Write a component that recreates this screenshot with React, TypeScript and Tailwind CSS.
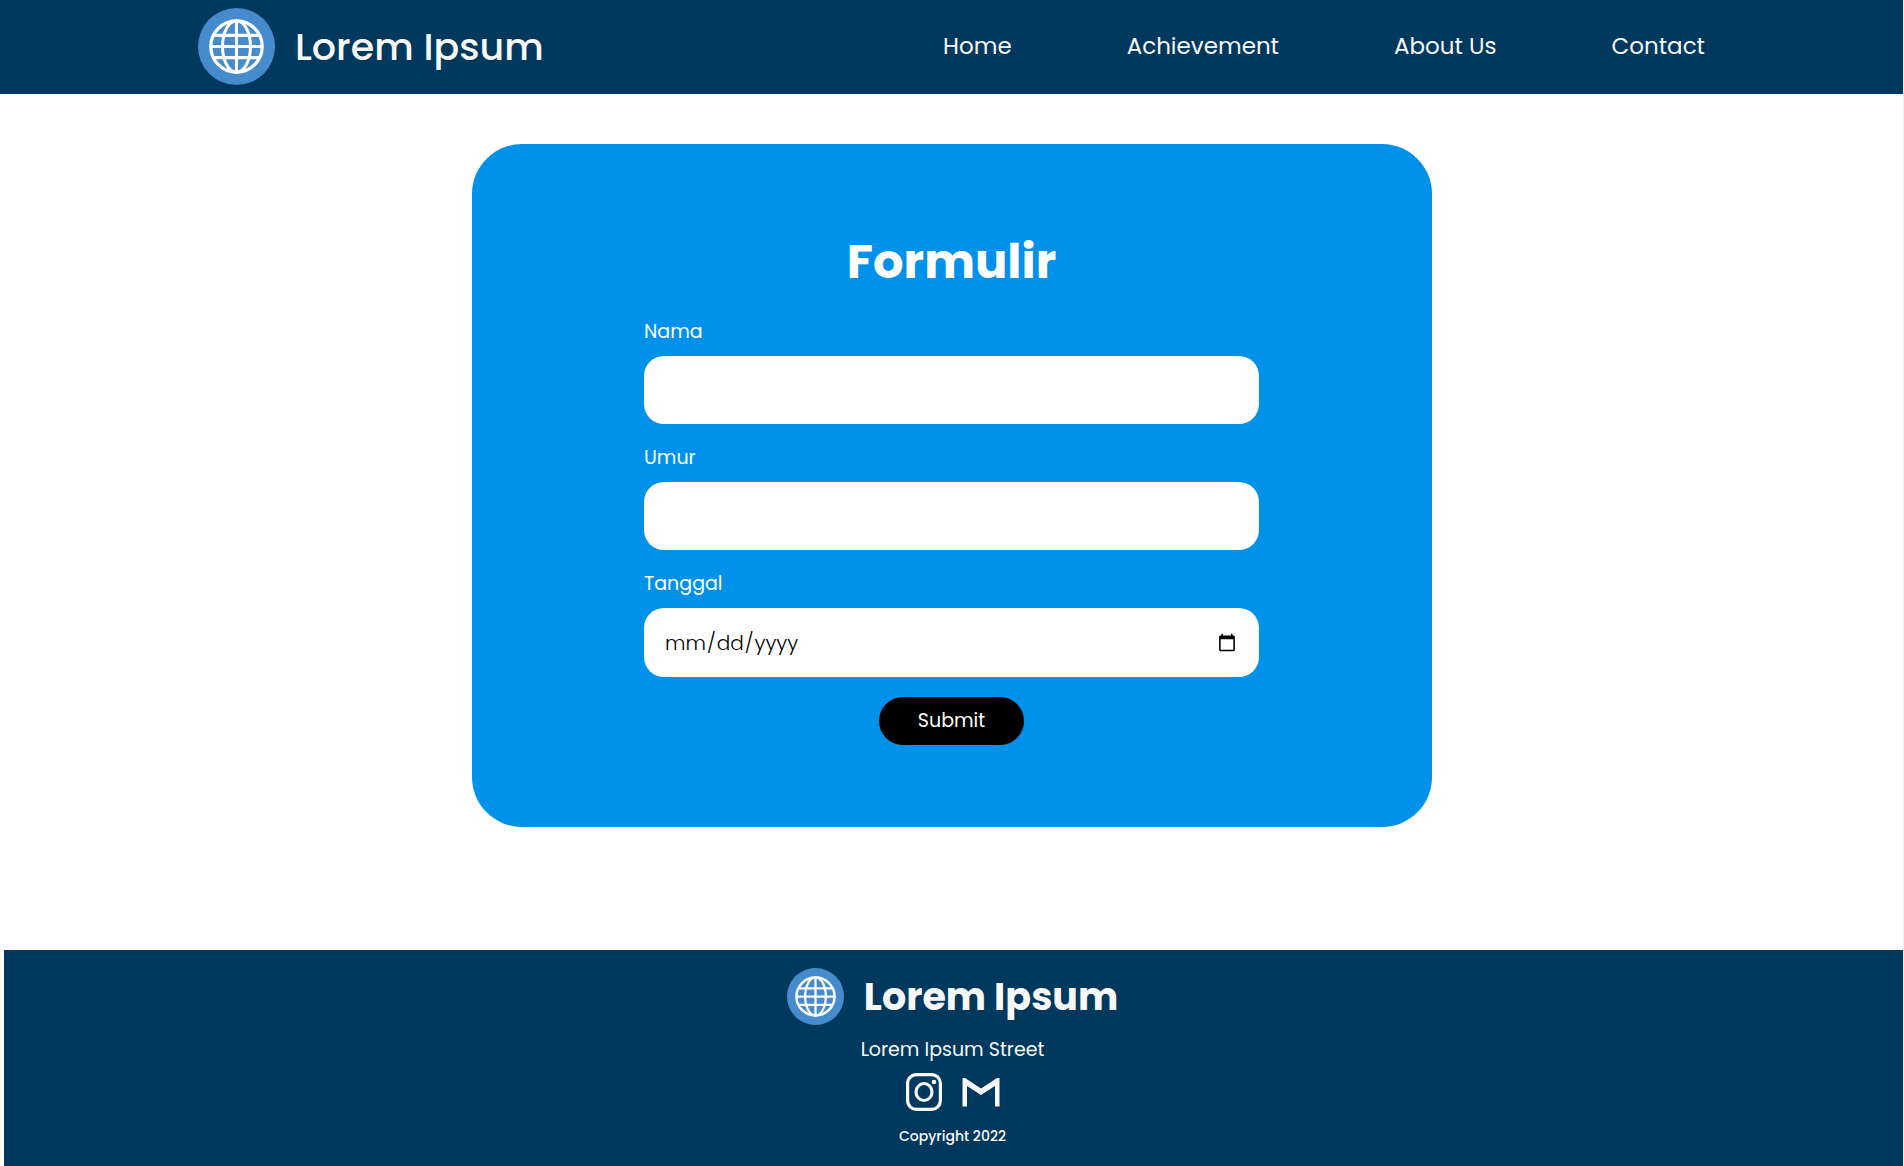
import type { ReactNode } from "react";

const navItems = ["Home", "Achievement", "About Us", "Contact"];

function GlobeLogo({ className }: { className: string }) {
  return (
    <svg viewBox="0 0 76 76" className={className} aria-hidden="true">
      <circle cx="38" cy="38" r="38" fill="#468bcc" />
      <g fill="none" stroke="#fff" strokeWidth="3">
        <circle cx="38" cy="38" r="25.4" strokeWidth="3.2" />
        <ellipse cx="38" cy="38" rx="13.8" ry="25.4" />
        <path d="M38 12.4v51.2M12.4 38h51.2M16 27h44M16 49h44" />
      </g>
    </svg>
  );
}

function InstagramIcon() {
  return (
    <svg viewBox="0 0 36 38" className="h-[38px] w-9" fill="none" stroke="#f8f8f8" aria-hidden="true">
      <rect x="1.6" y="1.6" width="32.8" height="34.8" rx="9" strokeWidth="3.2" />
      <ellipse cx="18" cy="19" rx="8" ry="8.5" strokeWidth="3.2" />
      <circle cx="28" cy="9" r="2.3" fill="#f8f8f8" stroke="none" />
    </svg>
  );
}

function MailIcon() {
  return (
    <svg viewBox="0 0 38 30" className="h-[30px] w-[38px]" aria-hidden="true">
      <path fill="#f8f8f8" d="M.5 29.500V1H3l16 10.500L35 1h2.500v28.500H33V9L19 18 5 9v20.500z" />
    </svg>
  );
}

function Field({ id, label, children }: { id: string; label: string; children: ReactNode }) {
  return (
    <div className="mb-5 flex flex-col">
      <label htmlFor={id} className="mb-2.5 text-[19px] leading-7 text-white">
        {label}
      </label>
      {children}
    </div>
  );
}

const inputClass = "w-full rounded-[20px] bg-white px-5 text-xl font-light text-black";

export default function App() {
  return (
    <div className="flex min-h-screen flex-col border-r border-[#f1f1f1] bg-white font-[Poppins,Inter,sans-serif]">
      <header className="flex min-h-[94px] items-center justify-between bg-[#01395e] px-[198px] pb-0.5 text-[#f8f8f8]">
        <a href="#" className="flex items-center gap-5">
          <GlobeLogo className="size-[77px]" />
          <span className="text-[38px] font-medium">Lorem Ipsum</span>
        </a>
        <nav className="flex gap-[115px]">
          {navItems.map((item) => (
            <a key={item} href="#" className="text-[23px]">
              {item}
            </a>
          ))}
        </nav>
      </header>

      <main className="flex grow flex-col items-center pt-[50px] pb-[123px]">
        <form className="flex w-[960px] max-w-full flex-col items-center rounded-[50px] bg-[#0091eb] py-[82px]">
          <h1 className="text-5xl leading-[72px] font-bold text-white">Formulir</h1>
          <div className="mt-5 w-[615px] max-w-full">
            <Field id="nama" label="Nama">
              <input id="nama" type="text" className={`h-17 ${inputClass}`} />
            </Field>
            <Field id="umur" label="Umur">
              <input id="umur" type="text" className={`h-17 ${inputClass}`} />
            </Field>
            <Field id="tanggal" label="Tanggal">
              <input id="tanggal" type="date" className={`h-[69px] ${inputClass}`} />
            </Field>
          </div>
          <button type="submit" className="h-12 w-[145px] rounded-3xl bg-black text-[19px] text-white">
            Submit
          </button>
        </form>
      </main>

      <footer className="ml-1 flex min-h-[216px] flex-col items-center bg-[#01395e] pt-4 pr-0.5 text-[#f8f8f8]">
        <div className="flex h-[60px] items-center gap-5">
          <GlobeLogo className="size-[57px]" />
          <span className="text-[38px] font-bold">Lorem Ipsum</span>
        </div>
        <p className="mt-[9px] text-[19px] leading-[30px]">Lorem Ipsum Street</p>
        <div className="mt-2 flex items-center gap-5">
          <a href="#" aria-label="Instagram">
            <InstagramIcon />
          </a>
          <a href="#" aria-label="Email">
            <MailIcon />
          </a>
        </div>
        <p className="mt-[15px] text-sm font-medium">Copyright 2022</p>
      </footer>
    </div>
  );
}
